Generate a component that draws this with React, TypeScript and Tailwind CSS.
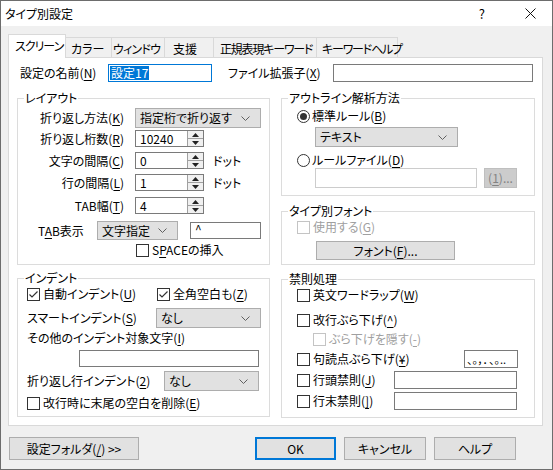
import React from 'react'

const U = ({ c }: { c: string }) => <span className="underline underline-offset-[2px] decoration-1">{c}</span>

function Check({ checked = false, disabled = false, children }: { checked?: boolean; disabled?: boolean; children: React.ReactNode }) {
  return (
    <div className={disabled ? 'flex items-center h-[14px] text-[#a0a0a0]' : 'flex items-center h-[14px]'}>
      <div className={disabled ? 'w-[13px] h-[13px] border border-[#c4c4c4] bg-white' : 'w-[13px] h-[13px] border border-[#333333] bg-white flex items-center justify-center'}>
        {checked && (
          <svg width="11" height="11" viewBox="0 0 11 11">
            <path d="M1.5 5.5 L4 8 L9.5 2.5" stroke="#333" strokeWidth="1.2" fill="none" />
          </svg>
        )}
      </div>
      <span className="ml-[3px] whitespace-nowrap">{children}</span>
    </div>
  )
}

function Radio({ checked = false, children }: { checked?: boolean; children: React.ReactNode }) {
  return (
    <div className="flex items-center h-[14px]">
      <div className="w-[13px] h-[13px] rounded-full border border-[#333333] bg-white flex items-center justify-center">
        {checked && <div className="w-[7px] h-[7px] rounded-full bg-[#333333]" />}
      </div>
      <span className="ml-[2px] whitespace-nowrap">{children}</span>
    </div>
  )
}

function Chevron() {
  return (
    <svg width="9" height="5" viewBox="0 0 9 5" className="mr-[10px]">
      <path d="M0.5 0.5 L4.5 4.5 L8.5 0.5" stroke="#606060" strokeWidth="1" fill="none" />
    </svg>
  )
}

function Combo({ text, className }: { text: string; className: string }) {
  return (
    <div className={'bg-[#e1e1e1] border border-[#adadad] flex items-center justify-between pl-[4px] ' + className}>
      <span className="whitespace-nowrap">{text}</span>
      <Chevron />
    </div>
  )
}

function Spin({ value }: { value: string }) {
  return (
    <div className="w-[69px] h-[17px] border border-[#7a7a7a] bg-white flex">
      <div className="flex-1 pl-[4px] leading-[15px]">{value}</div>
      <div className="w-[16px] border-l border-[#a0a0a0] flex flex-col bg-[#f0f0f0]">
        <div className="flex-1 flex items-center justify-center border-b border-[#a0a0a0]">
          <svg width="7" height="4" viewBox="0 0 7 4"><path d="M0 4 L3.5 0 L7 4 Z" fill="#222" /></svg>
        </div>
        <div className="flex-1 flex items-center justify-center">
          <svg width="7" height="4" viewBox="0 0 7 4"><path d="M0 0 L3.5 4 L7 0 Z" fill="#222" /></svg>
        </div>
      </div>
    </div>
  )
}

function Group({ label, className, children }: { label: string; className: string; children: React.ReactNode }) {
  return (
    <div className={'relative border border-[#dcdcdc] flex flex-col ' + className}>
      <span className="absolute left-[6px] top-[-8px] bg-white px-[1px] leading-[14px] whitespace-nowrap">{label}</span>
      {children}
    </div>
  )
}

function Btn({ children, className }: { children: React.ReactNode; className: string }) {
  return (
    <div className={'flex items-center justify-center whitespace-nowrap ' + className}>{children}</div>
  )
}

export default function App() {
  return (
    <div className="w-[553px] h-[470px] border border-[#6d6d6d] bg-[#f0f0f0] flex flex-col text-[12px] leading-[14px] text-black font-['Noto_Sans_CJK_JP',sans-serif] [font-feature-settings:'palt']">
      {/* title bar */}
      <div className="h-[25px] bg-white flex items-center pl-[4px]">
        <span>タイプ別設定</span>
        <span className="ml-auto mr-[40px] text-[13px]">?</span>
        <svg width="11" height="11" viewBox="0 0 11 11" className="mr-[16px]">
          <path d="M0.5 0.5 L10.5 10.5 M10.5 0.5 L0.5 10.5" stroke="#111" strokeWidth="1" />
        </svg>
      </div>

      {/* tabs */}
      <div className="mt-[8px] ml-[7px] h-[23px] flex items-end whitespace-nowrap">
        <div className="relative z-10 mb-[-1px] h-[24px] w-[58px] bg-white border border-b-0 border-[#d9d9d9] pl-[6px] pt-[4px] tracking-[-1px]">スクリーン</div>
        <div className="h-[20px] w-[46px] border-t border-r border-[#d9d9d9] pl-[5px] pt-[4px]">カラー</div>
        <div className="h-[20px] w-[53px] border-t border-r border-[#d9d9d9] pl-[1px] pt-[4px] tracking-[-0.8px]">ウィンドウ</div>
        <div className="h-[20px] w-[49px] border-t border-r border-[#d9d9d9] pl-[8px] pt-[4px]">支援</div>
        <div className="h-[20px] w-[103px] border-t border-r border-[#d9d9d9] pl-[6px] pt-[4px] tracking-[-1.2px]">正規表現キーワード</div>
        <div className="h-[20px] w-[81px] border-t border-r border-[#d9d9d9] pl-[5px] pt-[4px] tracking-[-1.2px]">キーワードヘルプ</div>
      </div>

      {/* page */}
      <div className="ml-[7px] w-[535px] h-[369px] bg-white border border-[#d9d9d9] flex flex-col">
        <div className="mt-[6px] h-[18px] flex items-center">
          <span className="ml-[11px] w-[88px] whitespace-nowrap">設定の名前(<U c="N" />)</span>
          <div className="w-[104px] h-[18px] border border-[#0078d7] flex items-center pl-[1px]">
            <span className="bg-[#0078d7] text-white leading-[14px] px-[1px]">設定17</span>
          </div>
          <span className="ml-[16px] w-[105px] whitespace-nowrap">ファイル拡張子(<U c="X" />)</span>
          <div className="w-[200px] h-[18px] border border-[#7a7a7a]" />
        </div>

        <div className="mt-[16px] ml-[8px] flex">
          {/* left column */}
          <div className="w-[253px] flex flex-col">
            <Group label="レイアウト" className="h-[167px]">
              <div className="mt-[9px] h-[20px] flex items-center">
                <span className="w-[106px] text-right whitespace-nowrap">折り返し方法(<U c="K" />)</span>
                <Combo text="指定桁で折り返す" className="ml-[11px] w-[126px] h-[20px]" />
              </div>
              <div className="mt-[2px] h-[17px] flex items-center">
                <span className="w-[106px] text-right whitespace-nowrap">折り返し桁数(<U c="R" />)</span>
                <div className="ml-[11px]"><Spin value="10240" /></div>
              </div>
              <div className="mt-[5px] h-[17px] flex items-center">
                <span className="w-[106px] text-right whitespace-nowrap">文字の間隔(<U c="C" />)</span>
                <div className="ml-[11px]"><Spin value="0" /></div>
                <span className="ml-[9px]">ドット</span>
              </div>
              <div className="mt-[5px] h-[17px] flex items-center">
                <span className="w-[106px] text-right whitespace-nowrap">行の間隔(<U c="L" />)</span>
                <div className="ml-[11px]"><Spin value="1" /></div>
                <span className="ml-[9px]">ドット</span>
              </div>
              <div className="mt-[6px] h-[17px] flex items-center">
                <span className="w-[106px] text-right whitespace-nowrap">TAB幅(<U c="T" />)</span>
                <div className="ml-[11px]"><Spin value="4" /></div>
              </div>
              <div className="mt-[7px] h-[19px] flex items-center">
                <span className="ml-[20px] w-[59px] whitespace-nowrap">T<U c="A" />B表示</span>
                <Combo text="文字指定" className="w-[81px] h-[19px]" />
                <div className="ml-[12px] w-[71px] h-[17px] border border-[#7a7a7a] pl-[4px] leading-[12px]">^</div>
              </div>
              <div className="mt-[3px] ml-[118px]">
                <Check>S<U c="P" />ACEの挿入</Check>
              </div>
            </Group>

            <Group label="インデント" className="mt-[13px] h-[139px]">
              <div className="mt-[8px] ml-[9px] flex">
                <div className="w-[130px]"><Check checked>自動インデント(<U c="U" />)</Check></div>
                <Check checked>全角空白も(<U c="Z" />)</Check>
              </div>
              <div className="mt-[7px] ml-[9px] h-[20px] flex items-center">
                <span className="w-[129px] whitespace-nowrap">スマートインデント(<U c="S" />)</span>
                <Combo text="なし" className="w-[105px] h-[20px]" />
              </div>
              <div className="mt-[3px] ml-[9px] h-[14px] whitespace-nowrap">その他のインデント対象文字(<U c="I" />)</div>
              <div className="mt-[5px] ml-[61px] w-[180px] h-[17px] border border-[#7a7a7a]" />
              <div className="mt-[4px] ml-[9px] h-[20px] flex items-center">
                <span className="w-[137px] whitespace-nowrap">折り返し行インデント(<U c="2" />)</span>
                <Combo text="なし" className="w-[95px] h-[20px]" />
              </div>
              <div className="mt-[5px] ml-[9px]">
                <Check>改行時に末尾の空白を削除(<U c="E" />)</Check>
              </div>
            </Group>
          </div>

          {/* right column */}
          <div className="ml-[11px] w-[254px] flex flex-col">
            <Group label="アウトライン解析方法" className="h-[98px]">
              <div className="mt-[10px] ml-[15px]"><Radio checked>標準ルール(<U c="B" />)</Radio></div>
              <Combo text="テキスト" className="mt-[4px] ml-[33px] w-[143px] h-[20px]" />
              <div className="mt-[6px] ml-[15px]"><Radio>ルールファイル(<U c="D" />)</Radio></div>
              <div className="mt-[1px] ml-[33px] flex">
                <div className="w-[162px] h-[20px] border border-[#cccccc] bg-white" />
                <Btn className="ml-[7px] w-[33px] h-[20px] bg-[#cccccc] border border-[#bfbfbf] text-[#838383]">(<U c="1" />)...</Btn>
              </div>
            </Group>

            <Group label="タイプ別フォント" className="mt-[15px] h-[54px]">
              <div className="mt-[8px] ml-[15px]"><Check disabled>使用する(<U c="G" />)</Check></div>
              <Btn className="mt-[7px] ml-[34px] w-[139px] h-[19px] bg-[#e1e1e1] border border-[#adadad]">フォント(<U c="F" />)...</Btn>
            </Group>

            <Group label="禁則処理" className="mt-[14px] h-[139px]">
              <div className="mt-[8px] ml-[15px]"><Check>英文ワードラップ(<U c="W" />)</Check></div>
              <div className="mt-[11px] ml-[15px]"><Check>改行ぶら下げ(<U c="^" />)</Check></div>
              <div className="mt-[5px] ml-[31px]"><Check disabled>ぶら下げを隠す(<U c="-" />)</Check></div>
              <div className="mt-[4px] ml-[15px] h-[18px] flex items-center">
                <div className="w-[167px]"><Check>句読点ぶら下げ(<U c="¥" />)</Check></div>
                <div className="w-[54px] h-[18px] border border-[#7a7a7a] overflow-hidden whitespace-nowrap pl-[2px] text-[11px] leading-[16px]">、。，．、。..</div>
              </div>
              <div className="mt-[3px] ml-[15px] h-[18px] flex items-center">
                <div className="w-[97px]"><Check>行頭禁則(<U c="J" />)</Check></div>
                <div className="w-[123px] h-[18px] border border-[#7a7a7a]" />
              </div>
              <div className="mt-[3px] ml-[15px] h-[18px] flex items-center">
                <div className="w-[97px]"><Check>行末禁則(<U c="]" />)</Check></div>
                <div className="w-[123px] h-[18px] border border-[#7a7a7a]" />
              </div>
            </Group>
          </div>
        </div>
      </div>

      {/* bottom buttons */}
      <div className="mt-[11px] flex">
        <Btn className="ml-[8px] w-[130px] h-[23px] bg-[#e1e1e1] border border-[#adadad]">設定フォルダ(<U c="/" />) &gt;&gt;</Btn>
        <Btn className="ml-[116px] w-[81px] h-[23px] bg-[#e1e1e1] border-2 border-[#0078d7]">OK</Btn>
        <Btn className="ml-[8px] w-[82px] h-[23px] bg-[#e1e1e1] border border-[#adadad]">キャンセル</Btn>
        <Btn className="ml-[8px] w-[82px] h-[23px] bg-[#e1e1e1] border border-[#adadad]">ヘルプ</Btn>
      </div>
    </div>
  )
}
